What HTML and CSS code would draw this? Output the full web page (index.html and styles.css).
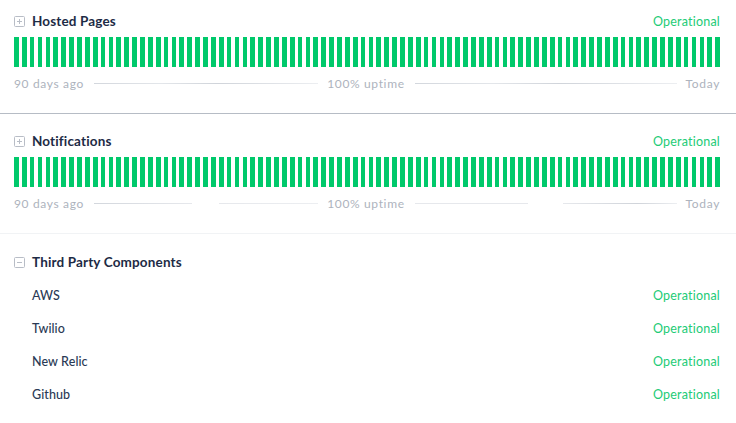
FILE: index.html
```html
<!DOCTYPE html>
<html>
<head>
<meta charset="utf-8">
<link rel="stylesheet" href="styles.css">
</head>
<body>
<div class="page">
  <section class="group first">
    <div class="head">
      <div class="title"><span class="toggle"><svg viewBox="0 0 11 11" width="11" height="11"><rect x="0.5" y="0.5" width="10" height="10" rx="1" fill="none" stroke="#b8bdc6"/><path d="M3 5.5h5M5.5 3v5" stroke="#b8bdc6" stroke-width="1"/></svg></span>Hosted Pages</div>
      <div class="status">Operational</div>
    </div>
    <div class="bars"></div>
    <div class="legend">
      <span>90 days ago</span>
      <span class="spacer left"></span>
      <span>100% uptime</span>
      <span class="spacer right"></span>
      <span>Today</span>
    </div>
  </section>
  <section class="group second">
    <div class="head">
      <div class="title"><span class="toggle"><svg viewBox="0 0 11 11" width="11" height="11"><rect x="0.5" y="0.5" width="10" height="10" rx="1" fill="none" stroke="#b8bdc6"/><path d="M3 5.5h5M5.5 3v5" stroke="#b8bdc6" stroke-width="1"/></svg></span>Notifications</div>
      <div class="status">Operational</div>
    </div>
    <div class="bars"></div>
    <div class="legend">
      <span>90 days ago</span>
      <span class="spacer left broken-l"></span>
      <span>100% uptime</span>
      <span class="spacer right broken-r"></span>
      <span>Today</span>
    </div>
  </section>
  <section class="group third">
    <div class="head">
      <div class="title"><span class="toggle"><svg viewBox="0 0 11 11" width="11" height="11"><rect x="0.5" y="0.5" width="10" height="10" rx="1" fill="none" stroke="#b8bdc6"/><path d="M3 5.5h5" stroke="#b8bdc6" stroke-width="1"/></svg></span>Third Party Components</div>
    </div>
    <div class="child"><span class="name">AWS</span><span class="status">Operational</span></div>
    <div class="child"><span class="name">Twilio</span><span class="status">Operational</span></div>
    <div class="child"><span class="name">New Relic</span><span class="status">Operational</span></div>
    <div class="child"><span class="name">Github</span><span class="status">Operational</span></div>
  </section>
</div>
</body>
</html>
```
FILE: styles.css
```css
* { box-sizing: border-box; }
html, body { margin: 0; padding: 0; background: #fff; }
body { font-family: Lato, "Open Sans", sans-serif; color: #1f2d46; }
.page { width: 736px; }
.group { padding: 0 16px 22px 14px; }
.group.first { padding-top: 11px; border-bottom: 1px solid #b6bcc5; }
.group.second { padding-top: 17px; border-bottom: 1px solid #f1f3f5; }
.group.third { padding-top: 18px; }
.head { display: flex; justify-content: space-between; align-items: center; height: 20px; }
.title { display: flex; align-items: center; font-size: 13.5px; font-weight: 700; color: #1d2b45; letter-spacing: 0.15px; }
.toggle { display: flex; width: 18px; }
.status { font-size: 12.5px; color: #22cb76; letter-spacing: 0.2px; }
.bars {
  margin-top: 6px; height: 30px;
  background: repeating-linear-gradient(90deg, #00c96b 0, #00c96b 0.6696%, transparent 0.6696%, transparent 1.1161%);
}
.legend { display: flex; align-items: center; height: 16px; margin-top: 8px; font-size: 12px; color: #adb3bd; letter-spacing: 0.65px; }
.spacer { height: 1px; margin: 0 9px 0 10px; background: linear-gradient(90deg, #d3d7dd 0%, #e3e6ea 30%, #d0d4da 55%, #eceef1 100%); }
.spacer.left { flex: 226; }
.spacer.right { flex: 264; }
.spacer.broken-l { background: linear-gradient(90deg, #d3d7dd 0%, #e6e8ec 43.8%, transparent 43.8%, transparent 55.8%, #e6e8ec 55.8%, #eceef1 100%); }
.spacer.broken-r { background: linear-gradient(90deg, #e6e8ec 0%, #e6e8ec 43.2%, transparent 43.2%, transparent 56.4%, #e6e8ec 56.4%, #d0d4da 85%, #eceef1 100%); }
.third .head { margin-bottom: 7px; }
.child { display: flex; justify-content: space-between; align-items: center; height: 33px; padding-left: 18px; }
.name { font-size: 12.5px; font-weight: 500; color: #2a3a55; letter-spacing: 0.1px; }
```
